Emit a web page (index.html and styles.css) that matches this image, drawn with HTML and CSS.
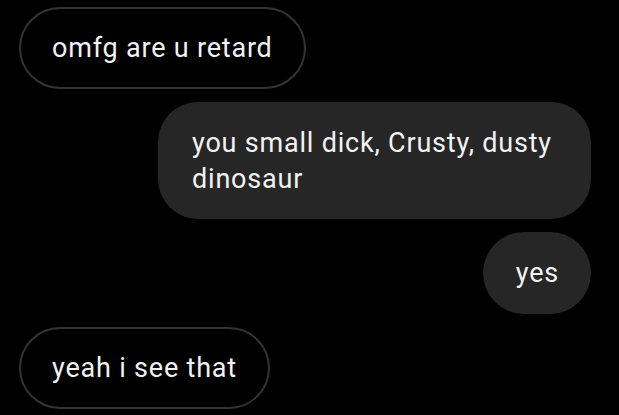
FILE: index.html
```html
<!DOCTYPE html>
<html>
<head>
<meta charset="utf-8">
<link rel="stylesheet" href="styles.css">
</head>
<body>
<div class="chat">
  <div class="msg in">omfg are u retard</div>
  <div class="msg out wide">you small dick, Crusty, dusty dinosaur</div>
  <div class="msg out">yes</div>
  <div class="msg in">yeah i see that</div>
</div>
</body>
</html>
```
FILE: styles.css
```css
html, body {
  margin: 0;
  background: #000;
}
body {
  width: 619px;
  height: 415px;
  overflow: hidden;
}
.chat {
  display: flex;
  flex-direction: column;
  gap: 13px;
  padding: 7px 28px 0 19px;
  font-family: Roboto, "Noto Sans", sans-serif;
  font-size: 27px;
  letter-spacing: 0.8px;
  line-height: 36px;
  color: #f2f2f2;
}
.msg {
  box-sizing: border-box;
  padding: 23px 32px 23px 33px;
  border-radius: 41px;
}
.in {
  align-self: flex-start;
  border: 2px solid #333;
  padding: 21px 31px;
}
.out {
  align-self: flex-end;
  background: #262626;
}
.wide {
  max-width: 433px;
  padding: 23px 34px 22px;
  border-radius: 40px;
}
```
